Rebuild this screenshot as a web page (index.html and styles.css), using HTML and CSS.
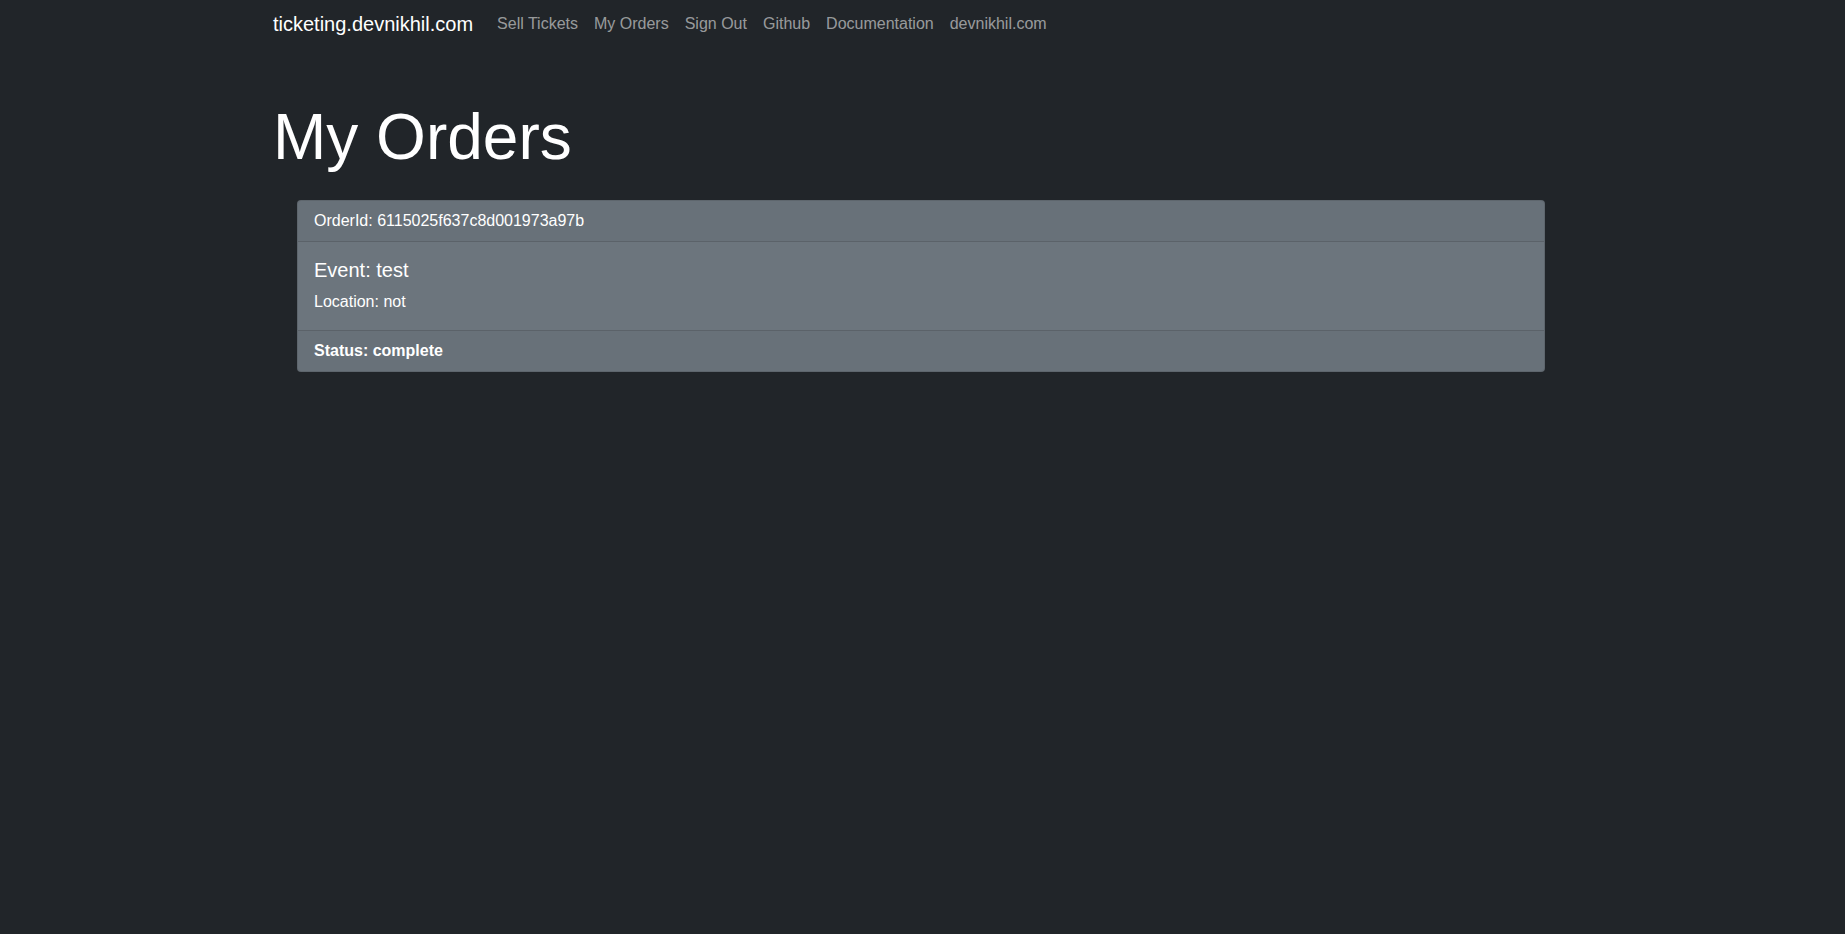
FILE: index.html
```html
<!DOCTYPE html>
<html lang="en">
<head>
<meta charset="utf-8">
<title>My Orders</title>
<link rel="stylesheet" href="styles.css">
</head>
<body>
<nav class="navbar">
  <div class="container nav-inner">
    <a class="brand" href="#">ticketing.devnikhil.com</a>
    <ul class="nav-links">
      <li><a class="nav-link" href="#">Sell Tickets</a></li>
      <li><a class="nav-link" href="#">My Orders</a></li>
      <li><a class="nav-link" href="#">Sign Out</a></li>
      <li><a class="nav-link" href="#">Github</a></li>
      <li><a class="nav-link" href="#">Documentation</a></li>
      <li><a class="nav-link" href="#">devnikhil.com</a></li>
    </ul>
  </div>
</nav>
<main class="container">
  <h1 class="page-title">My Orders</h1>
  <div class="card">
    <div class="card-header">OrderId: 6115025f637c8d001973a97b</div>
    <div class="card-body">
      <h5 class="card-title">Event: test</h5>
      <p class="card-text">Location: not</p>
    </div>
    <div class="card-footer">Status: complete</div>
  </div>
</main>
</body>
</html>
```

FILE: styles.css
```css
* { box-sizing: border-box; }
html, body { margin: 0; padding: 0; }
body {
  background: #212529;
  color: #fff;
  font-family: "Liberation Sans", Arial, sans-serif;
  font-size: 16px;
  line-height: 1.5;
  padding-right: 3px;
}
.container {
  max-width: 1320px;
  margin: 0 auto;
  padding: 0 12px;
}
.navbar {
  padding: 4px 0 3px;
}
.nav-inner {
  display: flex;
  align-items: center;
}
.brand {
  color: #fff;
  text-decoration: none;
  font-size: 20px;
  line-height: 30px;
  padding: 5px 0;
  margin-right: 16px;
}
.nav-links {
  display: flex;
  list-style: none;
  margin: 0;
  padding: 0;
}
.nav-link {
  display: block;
  padding: 8px;
  color: rgba(255, 255, 255, 0.55);
  text-decoration: none;
  line-height: 24px;
}
.page-title {
  font-size: 64px;
  font-weight: 300;
  line-height: 1.2;
  margin: 52px 0 0;
}
.card {
  margin: 24px 24px;
  background: #6c757d;
  border: 1px solid rgba(0, 0, 0, 0.125);
  border-radius: 4px;
  overflow: hidden;
}
.card-header {
  padding: 8px 16px;
  background: rgba(0, 0, 0, 0.03);
  border-bottom: 1px solid rgba(0, 0, 0, 0.125);
}
.card-body {
  padding: 16px;
}
.card-title {
  margin: 0 0 8px;
  font-size: 20px;
  font-weight: 500;
  line-height: 1.2;
}
.card-text {
  margin: 0;
}
.card-footer {
  padding: 8px 16px;
  background: rgba(0, 0, 0, 0.03);
  border-top: 1px solid rgba(0, 0, 0, 0.125);
  font-weight: 700;
}
```
